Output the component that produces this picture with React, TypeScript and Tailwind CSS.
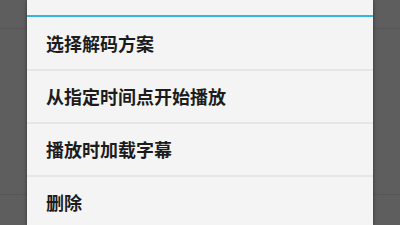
import React from "react";

const items = ["选择解码方案", "从指定时间点开始播放", "播放时加载字幕", "删除"];

const App: React.FC = () => {
  return (
    <div className="relative w-[400px] h-[225px] overflow-hidden bg-[#5e5e5e] flex justify-center">
      {/* faint list rows behind the dialog */}
      <div className="absolute left-0 right-0 top-[28px] h-px bg-[#565656]" />
      <div className="absolute left-0 right-0 top-[194px] h-px bg-[#565656]" />

      <div className="relative w-[346px] h-full bg-[#f4f4f4] shadow-[0_0_4px_rgba(0,0,0,0.45)] flex flex-col">
        <div className="h-[15px] shrink-0" />
        <div className="h-[2px] shrink-0 bg-[#33b5e5]" />
        {items.map((label, i) => (
          <div key={label} className="flex flex-col shrink-0">
            <div
              className={`${i === 0 ? "h-[52px]" : "h-[51px]"} flex items-center pl-[19px] text-[18px] font-bold text-[#1c1c1c] tracking-[0px]`}
              style={{ fontFamily: '"Noto Sans CJK SC", "Noto Sans", sans-serif' }}
            >
              {label}
            </div>
            {i < items.length - 1 && <div className="h-[2px] bg-[#e6e6e6]" />}
          </div>
        ))}
      </div>
    </div>
  );
};

export default App;
